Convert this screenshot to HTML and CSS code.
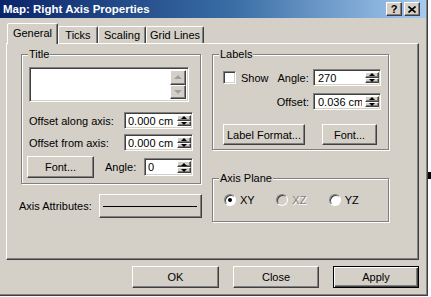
FILE: index.html
```html
<!DOCTYPE html>
<html lang="en">
<head>
    <meta charset="UTF-8">
    <title>Map: Right Axis Properties</title>
    <link rel="stylesheet" href="styles.css">
</head>
<body>
    <div class="window">
        <div class="titlebar">
            <span class="title">Map: Right Axis Properties</span>
            <div class="caption-btns">
                <span class="cbtn help">?</span>
                <span class="cbtn close">
                    <svg width="8" height="7" viewBox="0 0 8 7"><path d="M0.5 0.5 L7.5 6.5 M7.5 0.5 L0.5 6.5" stroke="#000" stroke-width="1.6"/></svg>
                </span>
            </div>
        </div>

        <div class="content">
            <div class="tabs">
                <div class="tab active">General</div>
                <div class="tab w-ticks">Ticks</div>
                <div class="tab w-scaling">Scaling</div>
                <div class="tab w-grid">Grid Lines</div>
            </div>

            <div class="sheet">
                <div class="col-left">
                    <fieldset class="group title-group">
                        <legend>Title</legend>
                        <div class="memo">
                            <div class="memo-scroll">
                                <span class="sbtn up"></span>
                                <span class="sbtn down"></span>
                            </div>
                        </div>
                        <div class="row first">
                            <span class="lbl">Offset along axis:</span>
                            <div class="spin w-offset"><span class="spin-val">0.000 cm</span><span class="updown"><i class="up"></i><i class="down"></i></span></div>
                        </div>
                        <div class="row">
                            <span class="lbl">Offset from axis:</span>
                            <div class="spin w-offset"><span class="spin-val">0.000 cm</span><span class="updown"><i class="up"></i><i class="down"></i></span></div>
                        </div>
                        <div class="row font-row">
                            <div class="btn font-btn">Font...</div>
                            <span class="lbl angle-lbl">Angle:</span>
                            <div class="spin w-angle"><span class="spin-val">0</span><span class="updown"><i class="up"></i><i class="down"></i></span></div>
                        </div>
                    </fieldset>

                    <div class="attr-row">
                        <span class="lbl">Axis Attributes:</span>
                        <div class="btn line-btn"><span class="line"></span></div>
                    </div>
                </div>

                <div class="col-right">
                    <fieldset class="group labels-group">
                        <legend>Labels</legend>
                        <div class="row show-row">
                            <span class="check"></span>
                            <span class="lbl show-lbl">Show</span>
                            <span class="lbl angle2-lbl">Angle:</span>
                            <div class="spin w-label"><span class="spin-val">270</span><span class="updown"><i class="up"></i><i class="down"></i></span></div>
                        </div>
                        <div class="row offset-row">
                            <span class="lbl">Offset:</span>
                            <div class="spin w-label"><span class="spin-val">0.036 cm</span><span class="updown"><i class="up"></i><i class="down"></i></span></div>
                        </div>
                        <div class="row btn-row">
                            <div class="btn fmt-btn">Label Format...</div>
                            <div class="btn font2-btn">Font...</div>
                        </div>
                    </fieldset>

                    <fieldset class="group plane-group">
                        <legend>Axis Plane</legend>
                        <div class="radios">
                            <span class="radio-item"><span class="radio checked"></span>XY</span>
                            <span class="radio-item disabled"><span class="radio"></span>XZ</span>
                            <span class="radio-item"><span class="radio"></span>YZ</span>
                        </div>
                    </fieldset>
                </div>
            </div>

            <div class="footer">
                <div class="btn foot-btn ok">OK</div>
                <div class="btn foot-btn">Close</div>
                <div class="btn foot-btn default">Apply</div>
            </div>
        </div>
    </div>
    <div class="outside"><span class="blob"></span></div>
</body>
</html>
```

FILE: styles.css
```css
body {
    margin: 0;
    display: flex;
    background-color: #fff;
    color: #000;
    font-family: "Liberation Sans", Arial, sans-serif;
    font-size: 11px;
}
.window {
    width: 428px;
    height: 296px;
    box-sizing: border-box;
    background-color: #d4d0c8;
    border-right: 1px solid #404040;
    border-bottom: 1px solid #404040;
    box-shadow: inset -1px -1px #808080;
    display: flex;
    flex-direction: column;
}
.titlebar {
    height: 18px;
    margin-right: 1px;
    background: linear-gradient(to right, #0a246a, #3a6ea5 55%, #a6caf0);
    display: flex;
    align-items: center;
    justify-content: space-between;
    padding-left: 3px;
}
.title {
    color: #fff;
    font-weight: bold;
    font-size: 11.5px;
}
.caption-btns {
    display: flex;
    gap: 2px;
    margin-right: 6px;
}
.cbtn {
    width: 16px;
    height: 14px;
    box-sizing: border-box;
    background-color: #d4d0c8;
    border: 1px solid;
    border-color: #fff #404040 #404040 #fff;
    box-shadow: inset -1px -1px #808080;
    display: flex;
    align-items: center;
    justify-content: center;
    font-weight: bold;
    font-size: 11px;
}
.content {
    padding-left: 6px;
    display: flex;
    flex-direction: column;
}

/* tabs */
.tabs {
    display: flex;
    align-items: flex-end;
    height: 20px;
    margin-top: 5px;
    padding-left: 1px;
}
.tab {
    height: 17px;
    box-sizing: border-box;
    border: 1px solid;
    border-bottom: none;
    border-color: #fff #404040 transparent #fff;
    box-shadow: inset -1px 0 #808080;
    border-radius: 2px 2px 0 0;
    text-align: center;
    padding-top: 2px;
}
.tab.active {
    width: 51px;
    height: 21px;
    margin-bottom: -1px;
    background-color: #d4d0c8;
    position: relative;
    z-index: 1;
    padding-top: 3px;
}
.w-ticks { width: 40px; }
.w-scaling { width: 48px; }
.w-grid { width: 58px; }

.sheet {
    width: 413px;
    height: 217px;
    box-sizing: border-box;
    border: 1px solid;
    border-color: #fff #404040 #404040 #fff;
    box-shadow: inset -1px -1px #808080;
    display: flex;
    gap: 11px;
    padding: 4px 0 0 14px;
}
.col-left {
    width: 180px;
    flex-shrink: 0;
}

/* group boxes */
.group {
    margin: 0;
    border: 1px solid #808080;
    box-shadow: 1px 1px #fff, inset 1px 1px #fff;
    padding: 0 7px;
    min-width: 0;
    box-sizing: border-box;
}
.group legend {
    padding: 0 1px;
    margin-left: -1px;
    line-height: 13px;
    background-color: #d4d0c8;
}
.title-group {
    width: 180px;
    padding-top: 6px;
    padding-bottom: 5px;
}
.labels-group {
    width: 177px;
    padding-top: 4px;
    padding-bottom: 4px;
}
.plane-group {
    width: 177px;
    margin-top: 22px;
    padding-top: 6px;
    padding-bottom: 15px;
}

.row {
    display: flex;
    align-items: center;
    justify-content: space-between;
    margin-top: 5px;
}
.row.first {
    margin-top: 10px;
}
.lbl {
    white-space: nowrap;
}

/* sunken fields */
.memo, .spin, .check {
    box-sizing: border-box;
    border: 1px solid;
    border-color: #808080 #fff #fff #808080;
    box-shadow: inset 1px 1px #404040, inset -1px -1px #d4d0c8;
    background-color: #fff;
}
.memo {
    width: 160px;
    height: 35px;
    padding: 2px 2px 2px 0;
    display: flex;
    justify-content: flex-end;
}
.memo-scroll {
    width: 16px;
    display: flex;
    flex-direction: column;
}
.sbtn, .updown i {
    flex: 1;
    box-sizing: border-box;
    background-color: #d4d0c8;
    border: 1px solid;
    border-color: #fff #404040 #404040 #fff;
    box-shadow: inset -1px -1px #808080;
    display: flex;
    align-items: center;
    justify-content: center;
}
.sbtn::after, .updown i::after {
    content: "";
    border-left: 3px solid transparent;
    border-right: 3px solid transparent;
}
.sbtn.up::after {
    border-bottom: 4px solid #a0a0a0;
    border-left-width: 4px;
    border-right-width: 4px;
}
.sbtn.down::after {
    border-top: 4px solid #a0a0a0;
    border-left-width: 4px;
    border-right-width: 4px;
}
.updown i.up::after {
    border-bottom: 3px solid #000;
}
.updown i.down::after {
    border-top: 3px solid #000;
}

.spin {
    height: 17px;
    padding: 2px 1px 2px 2px;
    display: flex;
}
.spin-val {
    flex: 1;
    padding-left: 1px;
    line-height: 13px;
    overflow: hidden;
    white-space: nowrap;
}
.updown {
    width: 14px;
    display: flex;
    flex-direction: column;
}
.w-offset { width: 69px; }
.w-angle { width: 49px; height: 18px; }
.w-label { width: 68px; }
.w-label .spin-val {
    padding-left: 2px;
    margin-right: 3px;
}

/* buttons */
.btn {
    box-sizing: border-box;
    background-color: #d4d0c8;
    border: 1px solid;
    border-color: #fff #404040 #404040 #fff;
    box-shadow: inset -1px -1px #808080;
    display: flex;
    align-items: center;
    justify-content: center;
    white-space: nowrap;
}
.font-row {
    justify-content: flex-start;
}
.font-btn {
    width: 67px;
    height: 22px;
    margin-left: -2px;
}
.angle-lbl {
    margin-left: 11px;
}
.font-row .spin {
    margin-left: auto;
}
.attr-row {
    display: flex;
    align-items: center;
    margin: 10px 0 0 -2px;
}
.line-btn {
    width: 103px;
    height: 24px;
    margin-left: 7px;
    flex-shrink: 0;
}
.line {
    width: 94px;
    height: 1px;
    background-color: #000;
}

/* labels group */
.show-row {
    justify-content: flex-start;
    margin-top: 4px;
}
.check {
    width: 13px;
    height: 13px;
    margin-left: 3px;
}
.show-lbl {
    margin-left: 5px;
}
.angle2-lbl {
    margin-left: 9px;
    margin-right: 4px;
}
.show-row .spin {
    margin-left: auto;
}
.offset-row {
    justify-content: flex-end;
    gap: 4px;
    margin-top: 7px;
}
.btn-row {
    justify-content: flex-start;
    margin-top: 14px;
}
.fmt-btn {
    width: 82px;
    height: 21px;
    margin-left: 3px;
}
.font2-btn {
    width: 55px;
    height: 21px;
    margin-left: 17px;
}

/* radios */
.radios {
    display: flex;
    margin-top: 3px;
}
.radio-item {
    display: flex;
    align-items: center;
    width: 54px;
    margin-left: 4px;
}
.radio-item + .radio-item {
    margin-left: 0;
}
.radio {
    width: 12px;
    height: 12px;
    box-sizing: border-box;
    border-radius: 50%;
    border: 1px solid;
    border-color: #808080 #fff #fff #808080;
    box-shadow: inset 1px 1px #404040;
    background-color: #fff;
    margin-right: 4px;
    display: flex;
    align-items: center;
    justify-content: center;
}
.radio.checked::after {
    content: "";
    width: 4px;
    height: 4px;
    border-radius: 50%;
    background-color: #000;
}
.disabled {
    color: #808080;
    text-shadow: 1px 1px #fff;
}
.disabled .radio {
    background-color: #d4d0c8;
}

/* footer */
.footer {
    display: flex;
    justify-content: flex-end;
    gap: 14px;
    margin-top: 6px;
    width: 413px;
}
.foot-btn {
    width: 86px;
    height: 22px;
}
.foot-btn.ok {
    width: 87px;
}
.foot-btn.default {
    border-color: #000;
    box-shadow: inset 1px 1px #fff, inset -1px -1px #404040, inset -2px -2px #808080;
}

.outside {
    flex: 1;
    padding-top: 172px;
}
.blob {
    display: block;
    width: 3px;
    height: 7px;
    background-color: #000;
}
```
